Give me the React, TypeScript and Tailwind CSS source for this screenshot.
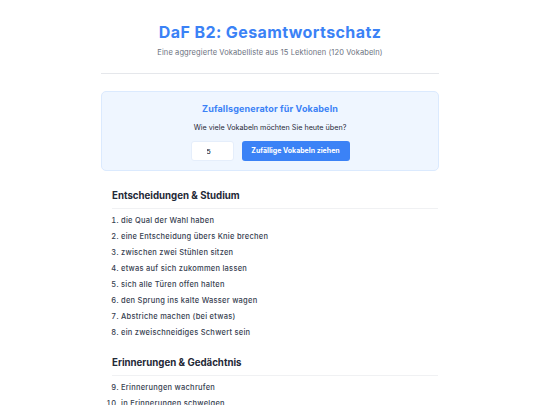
import React, { useState } from 'react';

type Section = {
  title: string;
  items: string[];
};

const sections: Section[] = [
  {
    title: 'Entscheidungen & Studium',
    items: [
      'die Qual der Wahl haben',
      'eine Entscheidung übers Knie brechen',
      'zwischen zwei Stühlen sitzen',
      'etwas auf sich zukommen lassen',
      'sich alle Türen offen halten',
      'den Sprung ins kalte Wasser wagen',
      'Abstriche machen (bei etwas)',
      'ein zweischneidiges Schwert sein',
    ],
  },
  {
    title: 'Erinnerungen & Gedächtnis',
    items: [
      'Erinnerungen wachrufen',
      'in Erinnerungen schwelgen',
      'etwas im Gedächtnis behalten',
      'sich an etwas erinnern',
    ],
  },
];

export default function App() {
  const [count, setCount] = useState('5');

  let offset = 1;

  return (
    <div className="min-h-screen bg-white font-['Inter',sans-serif] text-[#374151]">
      <div className="mx-auto w-[338px]">
        {/* Header */}
        <header className="pt-[23px] pb-[15px] border-b border-[#e5e7eb] text-center">
          <h1 className="text-[16px] leading-[18px] font-bold tracking-[0.4px] text-[#3b82f6]">
            DaF B2: Gesamtwortschatz
          </h1>
          <p className="mt-[7px] text-[7.5px] leading-[10px] tracking-[0.1px] text-[#6b7280]">
            Eine aggregierte Vokabelliste aus 15 Lektionen (120 Vokabeln)
          </p>
        </header>

        {/* Random picker */}
        <div className="mt-[17px] rounded-[5px] border border-[#dbeafe] bg-[#eff6ff] pt-[11px] pb-[9px] text-center">
          <h2 className="text-[9px] leading-[12px] font-bold tracking-[0.15px] text-[#3b82f6]">
            Zufallsgenerator für Vokabeln
          </h2>
          <p className="mt-[8px] text-[7.2px] leading-[10px] text-[#1f2937]">
            Wie viele Vokabeln möchten Sie heute üben?
          </p>
          <div className="mt-[8px] flex items-center justify-center gap-[8px]">
            <input
              type="number"
              value={count}
              onChange={(e) => setCount(e.target.value)}
              className="h-[20px] w-[43px] rounded-[3px] border border-[#e5eefb] bg-white pl-[15px] font-['Liberation_Sans',sans-serif] text-[7.5px] text-[#111827] outline-none [appearance:textfield]"
            />
            <button
              type="button"
              className="h-[20px] w-[108px] rounded-[3px] bg-[#3b82f6] text-[7px] font-bold text-white"
            >
              Zufällige Vokabeln ziehen
            </button>
          </div>
        </div>

        {/* Vocabulary sections */}
        <div className="mt-[18px] ml-[11px] mr-[1px]">
          {sections.map((section, i) => {
            const start = offset;
            offset += section.items.length;
            return (
              <section key={section.title} className={i > 0 ? 'mt-[15px]' : ''}>
                <h3 className="border-b border-[#f0f1f3] pb-[5px] text-[9.7px] leading-[14px] font-bold text-[#1f2937]">
                  {section.title}
                </h3>
                <ol start={start} className="mt-[4px] list-decimal pl-[9px]">
                  {section.items.map((item) => (
                    <li
                      key={item}
                      className="text-[7.5px] leading-[16px] font-medium tracking-[0.25px] text-[#374151]"
                    >
                      {item}
                    </li>
                  ))}
                </ol>
              </section>
            );
          })}
        </div>
      </div>
    </div>
  );
}
